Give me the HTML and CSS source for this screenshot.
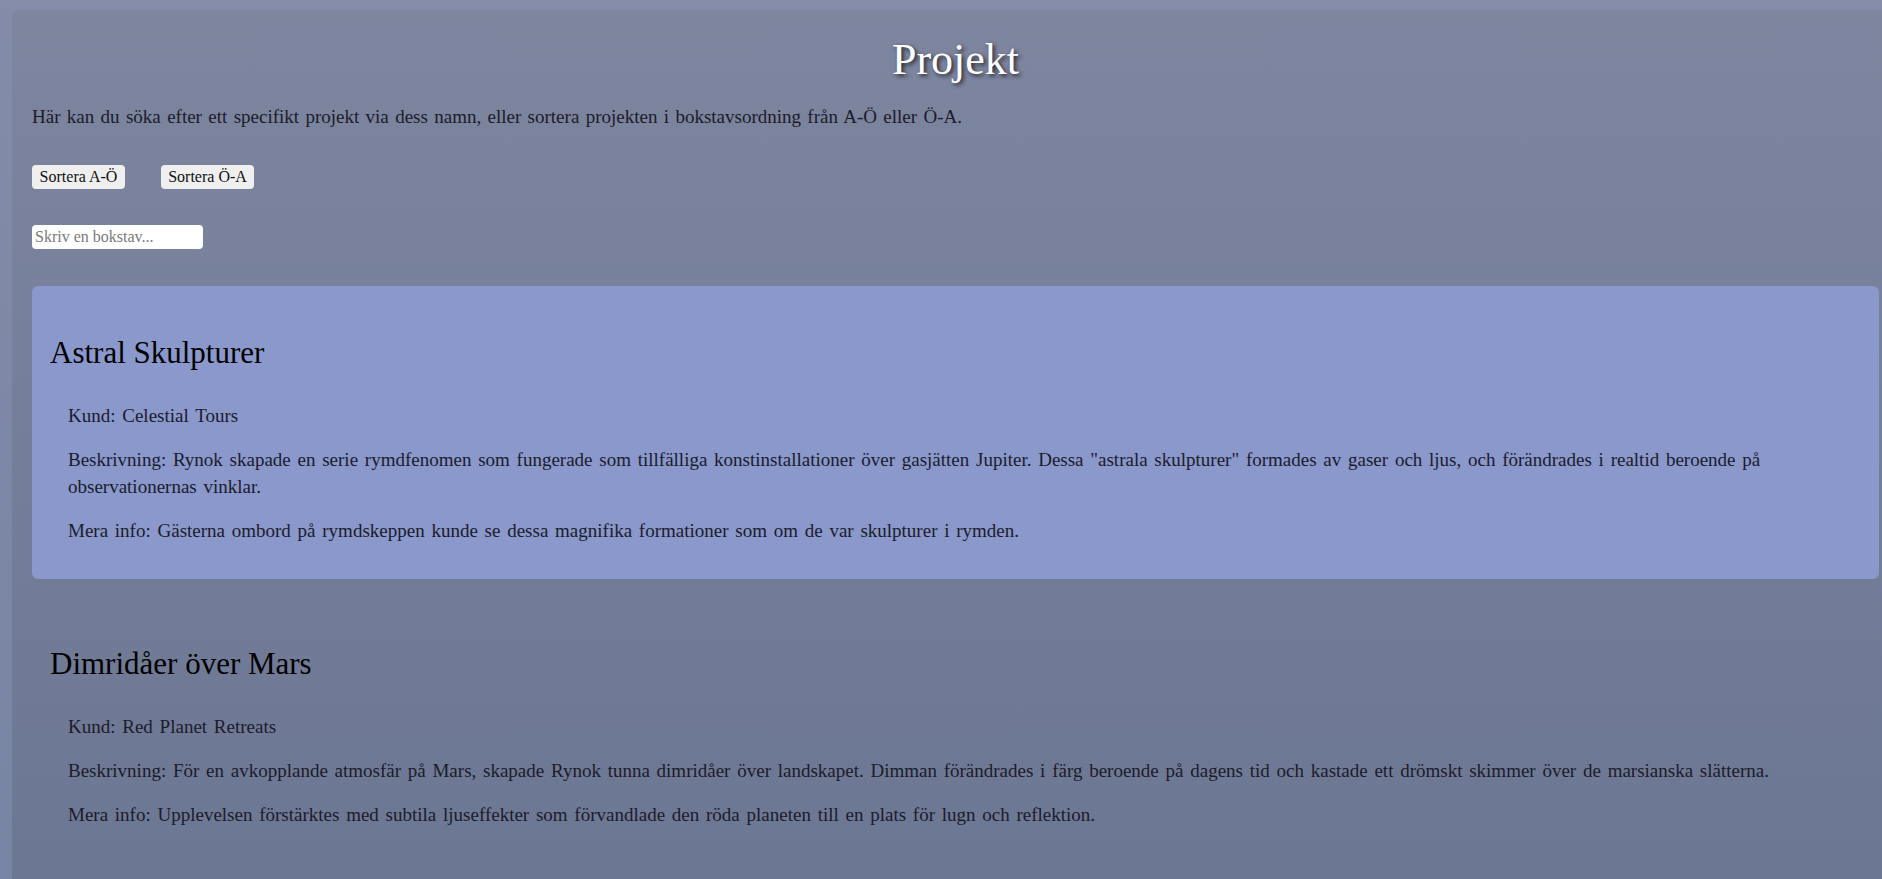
FILE: index.html
```html
<!DOCTYPE html>
<html lang="sv">
<head>
<meta charset="utf-8">
<title>Projekt</title>
<link rel="stylesheet" href="styles.css">
</head>
<body>
<main class="container">
  <h1 class="title">Projekt</h1>
  <p class="intro">Här kan du söka efter ett specifikt projekt via dess namn, eller sortera projekten i bokstavsordning från A-Ö eller Ö-A.</p>
  <div class="controls">
    <button class="sort-btn" type="button">Sortera A-Ö</button>
    <button class="sort-btn" type="button">Sortera Ö-A</button>
  </div>
  <div class="search">
    <input class="search-input" type="text" placeholder="Skriv en bokstav...">
  </div>
  <section class="projects">
    <article class="card">
      <h2 class="card-title">Astral Skulpturer</h2>
      <p class="card-text">Kund: Celestial Tours</p>
      <p class="card-text">Beskrivning: Rynok skapade en serie rymdfenomen som fungerade som tillfälliga konstinstallationer över gasjätten Jupiter. Dessa "astrala skulpturer" formades av gaser och ljus, och förändrades i realtid beroende på observationernas vinklar.</p>
      <p class="card-text">Mera info: Gästerna ombord på rymdskeppen kunde se dessa magnifika formationer som om de var skulpturer i rymden.</p>
    </article>
    <article class="card">
      <h2 class="card-title">Dimridåer över Mars</h2>
      <p class="card-text">Kund: Red Planet Retreats</p>
      <p class="card-text">Beskrivning: För en avkopplande atmosfär på Mars, skapade Rynok tunna dimridåer över landskapet. Dimman förändrades i färg beroende på dagens tid och kastade ett drömskt skimmer över de marsianska slätterna.</p>
      <p class="card-text">Mera info: Upplevelsen förstärktes med subtila ljuseffekter som förvandlade den röda planeten till en plats för lugn och reflektion.</p>
    </article>
    <article class="card card-empty"></article>
  </section>
</main>
</body>
</html>
```

FILE: styles.css
```css
html {
  height: 100%;
  overflow: hidden;
  background: linear-gradient(180deg, #848ca9 0%, #7784a3 100%);
}

body {
  margin: 0;
  min-height: 100%;
  font-family: "Liberation Serif", "Times New Roman", serif;
  color: #1b1c2b;
}

.container {
  margin: 10px 0 0 12px;
  padding: 0 3px 20px 20px;
  border-radius: 8px 0 0 0;
  background: linear-gradient(180deg, #7e859f 0px, #6c7793 870px);
  min-height: 900px;
}

.title {
  margin: 0;
  padding-top: 24px;
  font-size: 44px;
  line-height: 51px;
  font-weight: normal;
  text-align: center;
  color: #ffffff;
  text-shadow: 2px 2px 4px rgba(0, 0, 0, 0.75);
}

.intro {
  margin: 18px 0 0;
  font-size: 19px;
  line-height: 27px;
  word-spacing: 1.6px;
  color: #1b1c2b;
}

.controls {
  display: flex;
  gap: 36px;
  margin-top: 35px;
}

.sort-btn {
  font-family: "Liberation Serif", "Times New Roman", serif;
  font-size: 16px;
  line-height: 18px;
  height: 24px;
  width: 93px;
  padding: 3px 0;
  border: none;
  border-radius: 4px;
  background: #efeff0;
  color: #111;
}

.search {
  margin-top: 36px;
}

.search-input {
  display: block;
  width: 171px;
  height: 24px;
  box-sizing: border-box;
  padding: 2px 3px;
  border: none;
  border-radius: 4px;
  background: #ffffff;
  font-family: "Liberation Serif", "Times New Roman", serif;
  font-size: 16px;
  color: #222;
}

.search-input::placeholder {
  color: #7a7a7a;
}

.projects {
  margin-top: 37px;
  display: flex;
  flex-direction: column;
  gap: 18px;
}

.card {
  padding: 18px;
  border-radius: 6px;
}

.card:nth-child(odd) {
  background: #8a98cc;
}

.card-empty {
  min-height: 200px;
}

.card-title {
  margin: 31px 0;
  font-size: 31px;
  line-height: 36px;
  font-weight: normal;
  color: #000;
}

.card-text {
  margin: 17px 0;
  padding-left: 18px;
  font-size: 19px;
  line-height: 27px;
  word-spacing: 2px;
  color: #1b1c2b;
}
```
